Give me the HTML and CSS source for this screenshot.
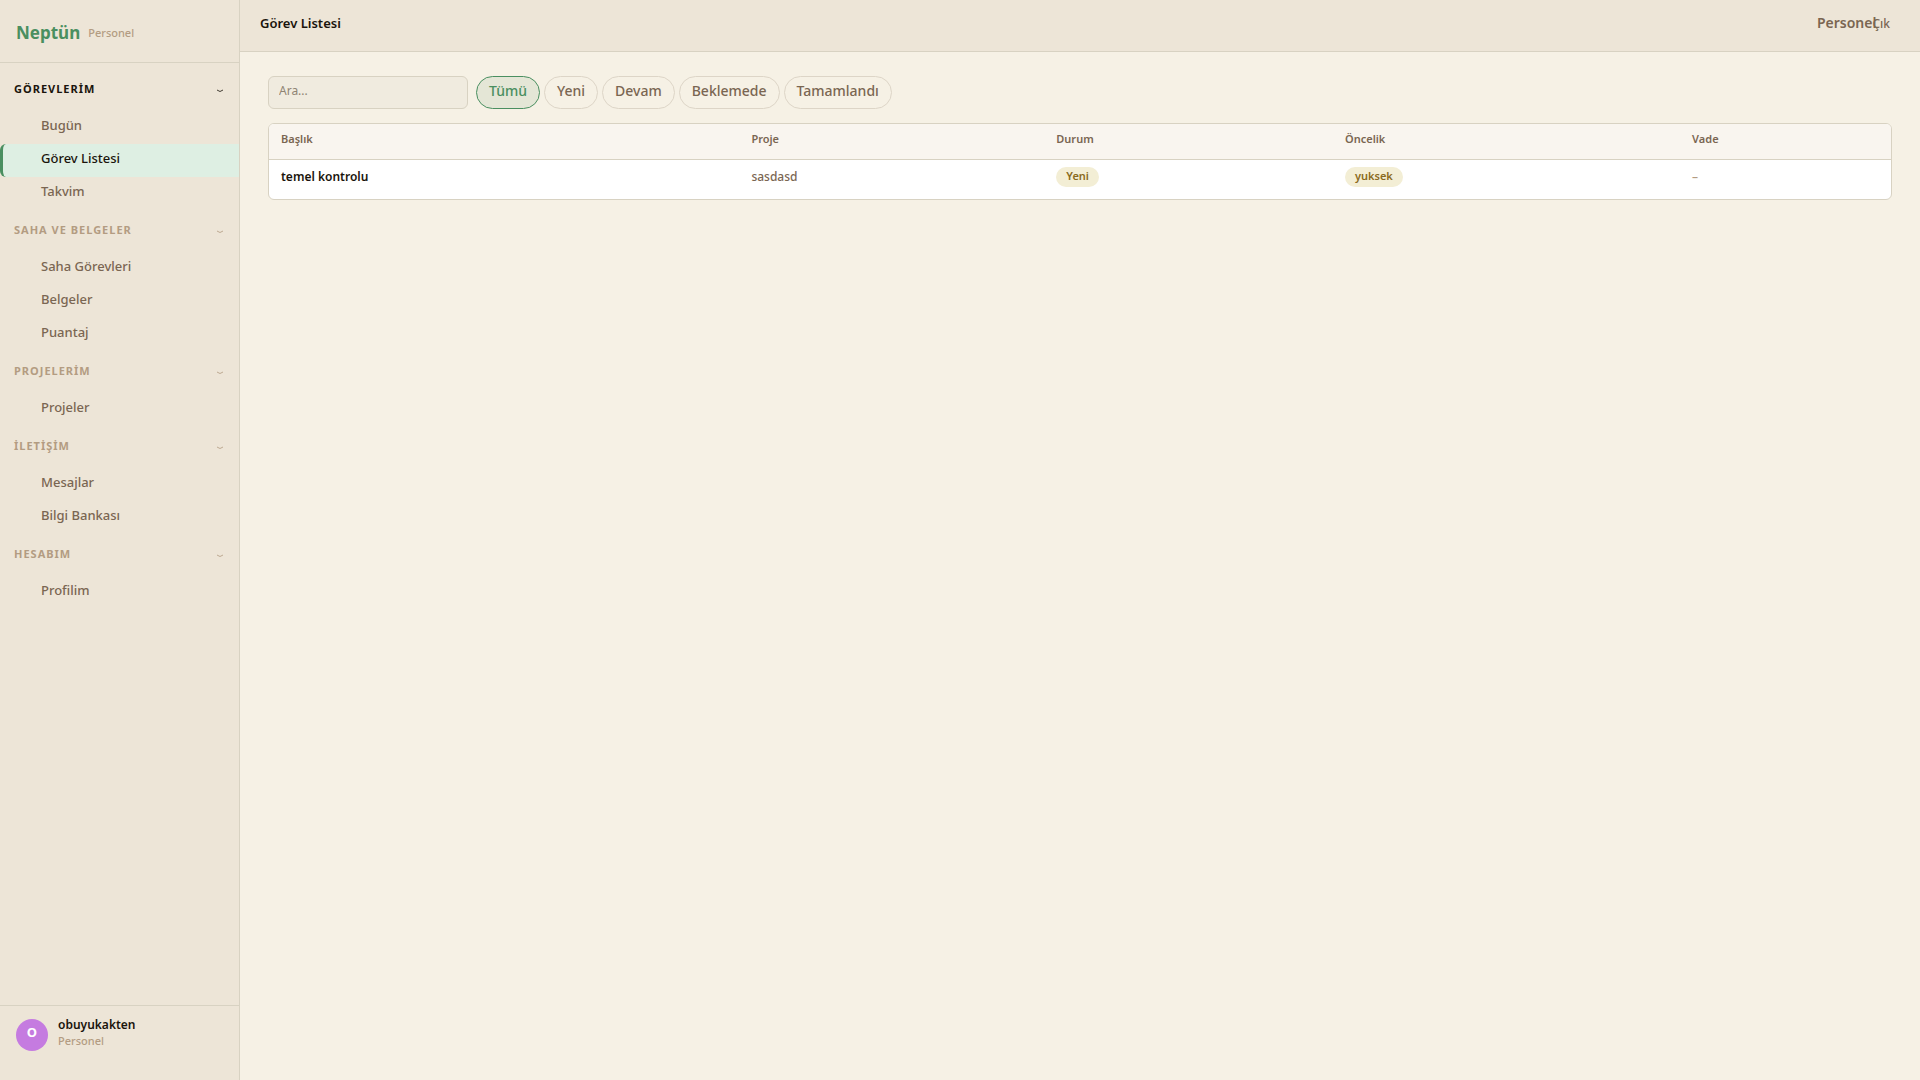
FILE: index.html
```html
<!DOCTYPE html>
<html lang="tr">
<head>
    <meta charset="UTF-8">
    <meta name="viewport" content="width=device-width, initial-scale=1.0">
    <title>Görev Listesi - Neptün</title>
    <link rel="stylesheet" href="styles.css">
</head>
<body>

    <aside class="sidebar">
        <div class="brand">
            <span class="brand-name">Neptün</span>
            <span class="brand-role">Personel</span>
        </div>

        <nav class="menu">
            <section class="group open">
                <button class="group-title" type="button">GÖREVLERİM
                    <svg class="arrow" viewBox="0 0 8 4"><path d="M1 1 Q4 4 7 1"/></svg>
                </button>
                <a class="item" href="#">Bugün</a>
                <a class="item active" href="#">Görev Listesi</a>
                <a class="item" href="#">Takvim</a>
            </section>
            <section class="group">
                <button class="group-title" type="button">SAHA VE BELGELER
                    <svg class="arrow" viewBox="0 0 8 4"><path d="M1 1 Q4 4 7 1"/></svg>
                </button>
                <a class="item" href="#">Saha Görevleri</a>
                <a class="item" href="#">Belgeler</a>
                <a class="item" href="#">Puantaj</a>
            </section>
            <section class="group">
                <button class="group-title" type="button">PROJELERİM
                    <svg class="arrow" viewBox="0 0 8 4"><path d="M1 1 Q4 4 7 1"/></svg>
                </button>
                <a class="item" href="#">Projeler</a>
            </section>
            <section class="group">
                <button class="group-title" type="button">İLETİŞİM
                    <svg class="arrow" viewBox="0 0 8 4"><path d="M1 1 Q4 4 7 1"/></svg>
                </button>
                <a class="item" href="#">Mesajlar</a>
                <a class="item" href="#">Bilgi Bankası</a>
            </section>
            <section class="group">
                <button class="group-title" type="button">HESABIM
                    <svg class="arrow" viewBox="0 0 8 4"><path d="M1 1 Q4 4 7 1"/></svg>
                </button>
                <a class="item" href="#">Profilim</a>
            </section>
        </nav>

        <div class="user">
            <span class="avatar">O</span>
            <div>
                <div class="user-name">obuyukakten</div>
                <div class="user-role">Personel</div>
            </div>
        </div>
    </aside>

    <div class="page">
        <header class="topbar">
            <h1>Görev Listesi</h1>
            <span class="role">Personel</span>
            <button class="logout" type="button">Çık</button>
        </header>

        <main class="content">
            <div class="filters">
                <input class="search" type="text" placeholder="Ara..." aria-label="Ara">
                <div class="chips">
                    <button class="chip selected" type="button">Tümü</button>
                    <button class="chip" type="button">Yeni</button>
                    <button class="chip" type="button">Devam</button>
                    <button class="chip" type="button">Beklemede</button>
                    <button class="chip" type="button">Tamamlandı</button>
                </div>
            </div>

            <div class="table-box">
                <table>
                    <colgroup>
                        <col class="col-title">
                        <col class="col-project">
                        <col class="col-status">
                        <col class="col-priority">
                        <col>
                    </colgroup>
                    <thead>
                        <tr>
                            <th>Başlık</th>
                            <th>Proje</th>
                            <th>Durum</th>
                            <th>Öncelik</th>
                            <th>Vade</th>
                        </tr>
                    </thead>
                    <tbody>
                        <tr>
                            <td class="title">temel kontrolu</td>
                            <td>sasdasd</td>
                            <td><span class="badge">Yeni</span></td>
                            <td><span class="badge">yuksek</span></td>
                            <td class="empty">–</td>
                        </tr>
                    </tbody>
                </table>
            </div>
        </main>
    </div>

</body>
</html>
```

FILE: styles.css
```css
* {
    box-sizing: border-box;
}
body {
    margin: 0;
    min-height: 100vh;
    display: flex;
    font-family: "Noto Sans", "Open Sans", sans-serif;
    font-size: 13px;
    line-height: 18px;
    color: #7a6652;
    background-color: #f6f1e5;
}
button, input {
    font-family: inherit;
    color: inherit;
}
button {
    cursor: pointer;
}

/* sidebar */
.sidebar {
    width: 240px;
    flex-shrink: 0;
    display: flex;
    flex-direction: column;
    background-color: #ede5d7;
    border-right: 1px solid #d8d2c2;
}
.brand {
    height: 63px;
    display: flex;
    align-items: center;
    gap: 8px;
    padding: 4px 16px 0;
    border-bottom: 1px solid #d8d2c2;
}
.brand-name {
    font-size: 17px;
    font-weight: 700;
    color: #4a8f60;
}
.brand-role {
    font-size: 11px;
    font-weight: 500;
    color: #b39c82;
}
.menu {
    flex: 1;
    padding-top: 12px;
}
.group {
    padding-bottom: 6px;
}
.group-title {
    width: 100%;
    height: 28px;
    display: flex;
    align-items: center;
    justify-content: space-between;
    padding: 0 15px 1px 14px;
    margin-bottom: 8px;
    border: none;
    background: none;
    font-size: 11px;
    font-weight: 700;
    letter-spacing: 1px;
    color: #b39c82;
}
.group.open .group-title {
    color: #1a140c;
}
.arrow {
    width: 8px;
    height: 4px;
    margin-top: 5px;
    fill: none;
    stroke: currentColor;
    opacity: 0.8;
}
.item {
    display: block;
    height: 33px;
    padding: 5px 16px 10px 38px;
    border-left: 3px solid transparent;
    border-radius: 6px 0 0 6px;
    font-weight: 500;
    color: #7a6652;
    text-decoration: none;
}
.item.active {
    color: #1a140c;
    background-color: #deefe3;
    border-left-color: #4a8f60;
}
.user {
    height: 75px;
    display: flex;
    gap: 10px;
    padding: 13px 16px;
    border-top: 1px solid #d8d2c2;
}
.avatar {
    width: 32px;
    height: 32px;
    border-radius: 50%;
    background-color: #c57be0;
    color: #fff;
    font-weight: 700;
    line-height: 27px;
    text-align: center;
}
.user-name {
    font-size: 12px;
    font-weight: 600;
    line-height: 12px;
    color: #1a140c;
}
.user-role {
    font-size: 11px;
    font-weight: 500;
    line-height: 20px;
    color: #b39c82;
}

/* page */
.page {
    flex: 1;
}
.topbar {
    height: 52px;
    display: flex;
    align-items: center;
    padding: 0 30px 5px 20px;
    background-color: #ede5d7;
    border-bottom: 1px solid #d8d2c2;
}
.topbar h1 {
    flex: 1;
    margin: 0;
    font-size: 13px;
    font-weight: 600;
    color: #1a140c;
}
.role {
    font-size: 14px;
    font-weight: 600;
}
.logout {
    margin-left: -4px;
    padding: 0;
    border: none;
    background: none;
    font-size: 12px;
    font-weight: 500;
}
.content {
    padding: 24px 28px;
}
.filters {
    display: flex;
    gap: 8px;
    margin-bottom: 14px;
}
.search {
    width: 200px;
    height: 33px;
    padding: 0 10px 4px;
    border: 1px solid #d8d2c2;
    border-radius: 6px;
    background-color: #f0ebdf;
    font-size: 12px;
}
.search::placeholder {
    color: #8f8474;
}
.chips {
    display: flex;
    gap: 4px;
}
.chip {
    height: 33px;
    padding: 0 12px 4px;
    border: 1px solid #ddd5c7;
    border-radius: 17px;
    background: none;
    font-size: 14px;
    font-weight: 500;
}
.chip.selected {
    border-color: #4a8f60;
    background-color: #e4e6d6;
    color: #4a8f60;
}

/* task table */
.table-box {
    border: 1px solid #d8d2c2;
    border-radius: 6px;
    overflow: hidden;
    background-color: #fff;
}
table {
    width: 100%;
    table-layout: fixed;
    border-collapse: collapse;
}
.col-title {
    width: 29%;
}
.col-project {
    width: 18.8%;
}
.col-status {
    width: 17.8%;
}
.col-priority {
    width: 21.4%;
}
th {
    height: 35px;
    padding: 0 12px 4px;
    border-bottom: 1px solid #d8d2c2;
    background-color: #f9f5ef;
    font-size: 11px;
    font-weight: 600;
    text-align: left;
}
td {
    height: 40px;
    padding: 0 12px 4px;
    font-size: 12px;
    font-weight: 500;
}
.title {
    font-weight: 600;
    color: #1a140c;
}
.empty {
    color: #b39c82;
}
.badge {
    display: inline-block;
    height: 20px;
    padding: 0 10px;
    border-radius: 10px;
    background-color: #f3eed5;
    color: #8a6a20;
    font-size: 11px;
    font-weight: 600;
    line-height: 17px;
    vertical-align: middle;
}
```
